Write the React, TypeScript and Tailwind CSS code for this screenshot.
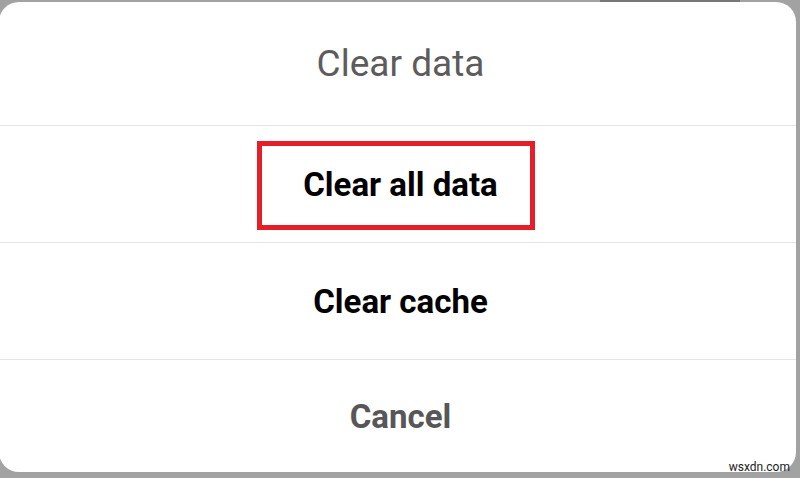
import React from 'react';

const options = [
  { label: 'Clear all data', highlighted: true },
  { label: 'Clear cache', highlighted: false },
];

const App = () => {
  return (
    <div
      className="relative w-[800px] h-[478px] overflow-hidden bg-[#a2a2a2] pt-[2px] pr-[4px] pb-[6px]"
      style={{ fontFamily: 'Roboto, "Noto Sans", sans-serif' }}
    >
      {/* status bar text peeking behind the sheet */}
      <div className="absolute top-0 left-[600px] w-[140px] h-[2px] bg-[#777]" />

      <div className="flex flex-col h-full -ml-[1px] rounded-[20px] bg-white">
        {/* Title */}
        <div className="h-[123px] flex items-center justify-center pl-[6px]">
          <span className="text-[37px] text-[#5c5c5c] leading-none">Clear data</span>
        </div>

        {options.map(option => (
          <div
            key={option.label}
            className="relative h-[117px] flex items-center justify-center pl-[6px] border-t border-[#e5e5e5]"
          >
            <span className="text-[33px] font-bold text-black leading-none">{option.label}</span>
            {option.highlighted && (
              <div className="absolute left-[258px] top-[15px] w-[278px] h-[89px] border-[5px] border-[#e61e28]" />
            )}
          </div>
        ))}

        {/* Cancel */}
        <div className="flex-1 flex items-center justify-center pl-[6px] border-t border-[#e5e5e5]">
          <span className="text-[33px] font-bold text-[#575757] leading-none">Cancel</span>
        </div>
      </div>

      <span className="absolute right-[10px] bottom-[5px] text-[12px] text-[#222] leading-none">wsxdn.com</span>
    </div>
  );
};

export default App;
